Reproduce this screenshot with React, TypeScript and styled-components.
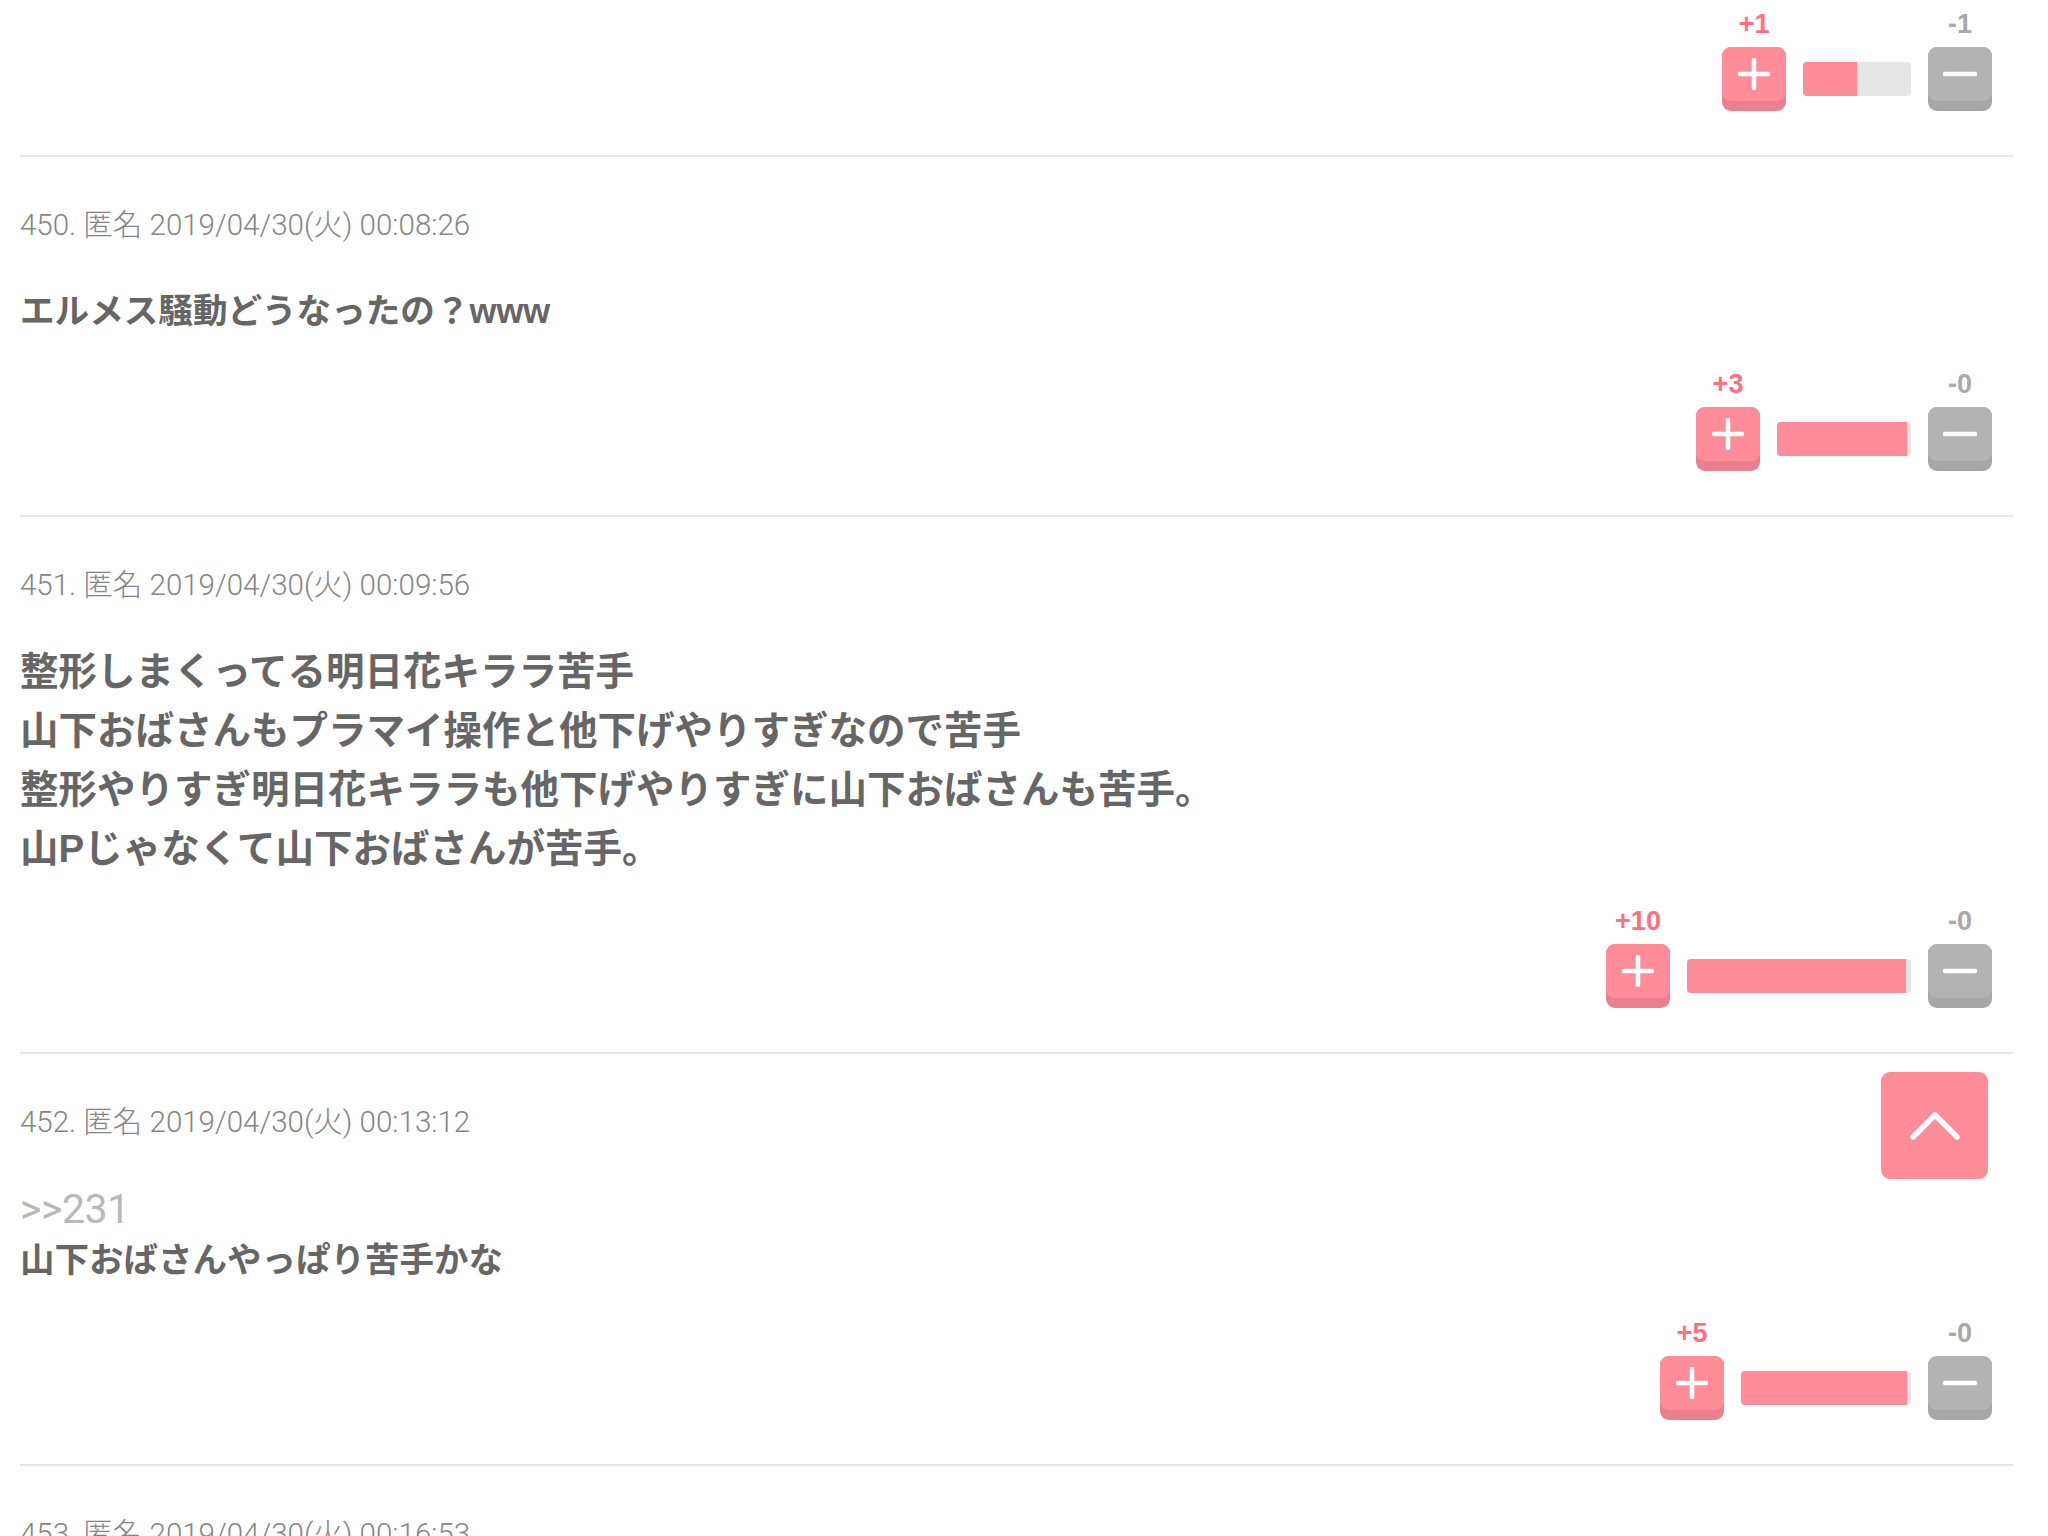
import React from "react";
import styled, { createGlobalStyle } from "styled-components";

const GlobalStyle = createGlobalStyle`
  html, body {
    margin: 0;
    padding: 0;
    background: #ffffff;
  }
  body {
    font-family: "Roboto", "Noto Sans CJK JP", sans-serif;
  }
`;

const Page = styled.div`
  padding: 0 35px 0 20px;
`;

const Item = styled.section<{ $first?: boolean }>`
  display: flex;
  flex-direction: column;
  padding: ${(p) => (p.$first ? "11px" : "50px")} 0 44px;
  border-bottom: 2px solid #e6e6e6;
`;

const Meta = styled.div`
  font-family: "Roboto", "Noto Sans CJK JP", sans-serif;
  font-weight: 300;
  font-size: 29.5px;
  line-height: 36px;
  color: #858585;
  white-space: nowrap;
`;

const Body = styled.div<{ $size: number }>`
  margin-top: 39px;
  font-family: "Liberation Sans", "Noto Sans CJK JP", sans-serif;
  font-weight: 700;
  font-size: ${(p) => p.$size}px;
  line-height: 59px;
  color: #666666;
`;

const Line = styled.div`
  white-space: nowrap;
`;

const Anchor = styled.div`
  margin-top: 8px;
  font-family: "Roboto", "Noto Sans CJK JP", sans-serif;
  font-weight: 400;
  font-size: 41px;
  line-height: 44px;
  color: #b8b8b8;
  letter-spacing: -0.5px;
`;

const VoteRow = styled.div<{ $first?: boolean }>`
  display: flex;
  justify-content: flex-end;
  padding-right: 21px;
  margin-top: ${(p) => (p.$first ? "0" : "30px")};
`;

const VoteGrid = styled.div<{ $bar: number }>`
  display: grid;
  grid-template-columns: 64px ${(p) => p.$bar}px 64px;
  grid-template-rows: 26px 64px;
  column-gap: 17px;
  row-gap: 10px;
`;

const Count = styled.div<{ $plus?: boolean }>`
  grid-row: 1;
  grid-column: ${(p) => (p.$plus ? 1 : 3)};
  text-align: center;
  white-space: nowrap;
  font-family: "Liberation Sans", "Noto Sans", sans-serif;
  font-weight: 700;
  font-size: 27px;
  line-height: 26px;
  color: ${(p) => (p.$plus ? "#ff6f80" : "#a9a9a9")};
`;

const VoteButton = styled.button<{ $plus?: boolean }>`
  grid-row: 2;
  grid-column: ${(p) => (p.$plus ? 1 : 3)};
  width: 64px;
  height: 64px;
  padding: 0;
  border: none;
  border-radius: 9px;
  background: ${(p) => (p.$plus ? "#ea808c" : "#a6a6a6")};
  display: flex;
  flex-direction: column;
  cursor: pointer;
`;

const Face = styled.span<{ $plus?: boolean }>`
  height: 54px;
  border-radius: 9px;
  background: ${(p) => (p.$plus ? "#ff8c98" : "#b3b3b3")};
  display: flex;
  align-items: center;
  justify-content: center;
`;

const Bar = styled.div`
  grid-row: 2;
  grid-column: 2;
  align-self: center;
  height: 34px;
  border-radius: 4px;
  background: #e6e6e6;
  overflow: hidden;
  display: flex;
`;

const Fill = styled.div`
  height: 100%;
  background: #ff8c98;
`;

const TopButton = styled.button`
  position: fixed;
  top: 1072px;
  right: 60px;
  width: 107px;
  height: 107px;
  border: none;
  padding: 0;
  border-radius: 9px;
  background: #ff8c98;
  display: flex;
  align-items: center;
  justify-content: center;
  cursor: pointer;
`;

const PlusIcon = () => (
  <svg width="32" height="32" viewBox="0 0 32 32">
    <path d="M16 2 V30 M2 16 H30" stroke="#fff" strokeWidth="4.5" strokeLinecap="round" fill="none" />
  </svg>
);

const MinusIcon = () => (
  <svg width="36" height="8" viewBox="0 0 36 8">
    <path d="M3 4 H33" stroke="#fff" strokeWidth="4.5" strokeLinecap="round" fill="none" />
  </svg>
);

const ChevronUp = () => (
  <svg width="56" height="34" viewBox="0 0 56 34">
    <path d="M6 28 L28 6 L50 28" stroke="#fff" strokeWidth="5.5" strokeLinecap="round" strokeLinejoin="round" fill="none" />
  </svg>
);

type Vote = { plus: number; minus: number; bar: number; fill: string };

const Votes = ({ v, first }: { v: Vote; first?: boolean }) => (
  <VoteRow $first={first}>
    <VoteGrid $bar={v.bar}>
      <Count $plus>+{v.plus}</Count>
      <Count>-{v.minus}</Count>
      <VoteButton $plus aria-label="plus">
        <Face $plus>
          <PlusIcon />
        </Face>
      </VoteButton>
      <Bar>
        <Fill style={{ width: v.fill }} />
      </Bar>
      <VoteButton aria-label="minus">
        <Face>
          <MinusIcon />
        </Face>
      </VoteButton>
    </VoteGrid>
  </VoteRow>
);

type Comment = {
  no: number;
  time: string;
  size: number;
  anchor?: string;
  lines: string[];
  vote?: Vote;
};

const comments: Comment[] = [
  {
    no: 450,
    time: "2019/04/30(火) 00:08:26",
    size: 34.6,
    lines: ["エルメス騒動どうなったの？www"],
    vote: { plus: 3, minus: 0, bar: 134, fill: "calc(100% - 4px)" },
  },
  {
    no: 451,
    time: "2019/04/30(火) 00:09:56",
    size: 38.5,
    lines: [
      "整形しまくってる明日花キララ苦手",
      "山下おばさんもプラマイ操作と他下げやりすぎなので苦手",
      "整形やりすぎ明日花キララも他下げやりすぎに山下おばさんも苦手。",
      "山Pじゃなくて山下おばさんが苦手。",
    ],
    vote: { plus: 10, minus: 0, bar: 224, fill: "calc(100% - 5px)" },
  },
  {
    no: 452,
    time: "2019/04/30(火) 00:13:12",
    size: 34.5,
    anchor: ">>231",
    lines: ["山下おばさんやっぱり苦手かな"],
    vote: { plus: 5, minus: 0, bar: 170, fill: "calc(100% - 4px)" },
  },
  {
    no: 453,
    time: "2019/04/30(火) 00:16:53",
    size: 34.5,
    lines: ["　"],
  },
];

export default function App() {
  return (
    <>
      <GlobalStyle />
      <Page>
        <Item $first>
          <Votes first v={{ plus: 1, minus: 1, bar: 108, fill: "50%" }} />
        </Item>
        {comments.map((c) => (
          <Item key={c.no}>
            <Meta>
              {c.no}. 匿名 {c.time}
            </Meta>
            <Body $size={c.size}>
              {c.anchor && <Anchor>{c.anchor}</Anchor>}
              {c.lines.map((l, i) => (
                <Line key={i}>{l}</Line>
              ))}
            </Body>
            {c.vote && <Votes v={c.vote} />}
          </Item>
        ))}
      </Page>
      <TopButton aria-label="ページトップへ">
        <ChevronUp />
      </TopButton>
    </>
  );
}
